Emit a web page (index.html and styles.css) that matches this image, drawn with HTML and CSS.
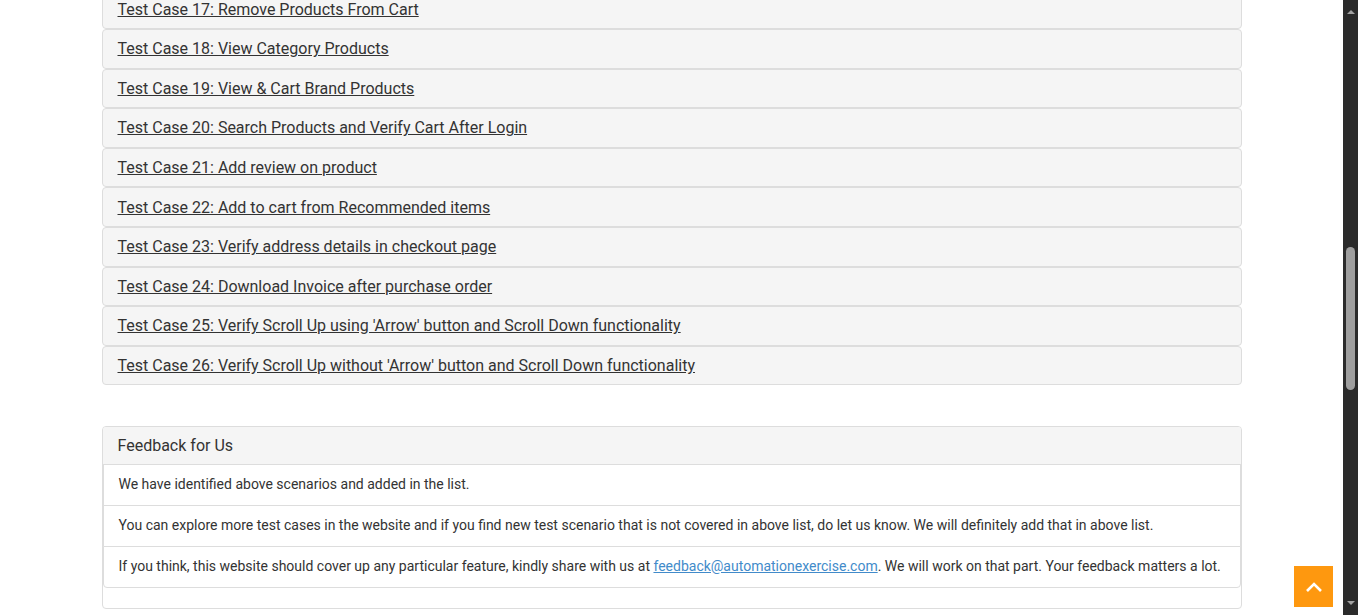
FILE: index.html
```html
<!DOCTYPE html>
<html lang="en">
<head>
<meta charset="utf-8">
<title>Test Cases</title>
<link rel="stylesheet" href="styles.css">
</head>
<body>
<div class="page">
  <main class="main">
    <div class="container">
      <div class="cases">
        <div class="case"><a href="#">Test Case 17: Remove Products From Cart</a></div>
        <div class="case"><a href="#">Test Case 18: View Category Products</a></div>
        <div class="case"><a href="#">Test Case 19: View &amp; Cart Brand Products</a></div>
        <div class="case"><a href="#">Test Case 20: Search Products and Verify Cart After Login</a></div>
        <div class="case"><a href="#">Test Case 21: Add review on product</a></div>
        <div class="case"><a href="#">Test Case 22: Add to cart from Recommended items</a></div>
        <div class="case"><a href="#">Test Case 23: Verify address details in checkout page</a></div>
        <div class="case"><a href="#">Test Case 24: Download Invoice after purchase order</a></div>
        <div class="case"><a href="#">Test Case 25: Verify Scroll Up using 'Arrow' button and Scroll Down functionality</a></div>
        <div class="case"><a href="#">Test Case 26: Verify Scroll Up without 'Arrow' button and Scroll Down functionality</a></div>
      </div>
      <section class="feedback">
        <div class="feedback-heading">Feedback for Us</div>
        <ul class="feedback-list">
          <li>We have identified above scenarios and added in the list.</li>
          <li>You can explore more test cases in the website and if you find new test scenario that is not covered in above list, do let us know. We will definitely add that in above list.</li>
          <li>If you think, this website should cover up any particular feature, kindly share with us at <a class="mail" href="#">feedback@automationexercise.com</a>. We will work on that part. Your feedback matters a lot.</li>
        </ul>
      </section>
    </div>
    <a class="scroll-up" href="#" aria-label="Scroll up">
      <svg width="18" height="12" viewBox="0 0 18 12"><path d="M2 10 L9 3 L16 10" fill="none" stroke="#fff" stroke-width="2.6"/></svg>
    </a>
  </main>
  <aside class="scrollbar">
    <span class="arrow-up"></span>
    <div class="track"><div class="thumb"></div></div>
    <span class="arrow-down"></span>
  </aside>
</div>
</body>
</html>
```
FILE: styles.css
```css
html, body {
  margin: 0;
  padding: 0;
  height: 615px;
  overflow: hidden;
  background: #fff;
}
body {
  font-family: Roboto, "Liberation Sans", sans-serif;
  color: #333;
}
.page {
  display: flex;
  height: 615px;
}
.main {
  flex: 1;
  overflow: hidden;
}
.container {
  width: 1140px;
  margin: 0 auto;
}
.cases {
  margin-top: -10.6px;
  display: flex;
  flex-direction: column;
}
.case {
  box-sizing: border-box;
  height: 39.6px;
  border: 1px solid #ddd;
  border-radius: 4px;
  background: #f5f5f5;
  padding: 0 15px;
  display: flex;
  align-items: center;
  font-size: 16px;
}
.case a {
  color: #333;
  text-decoration: underline;
}
.feedback {
  margin-top: 40.5px;
  border: 1px solid #ddd;
  border-radius: 4px;
  padding-bottom: 20px;
}
.feedback-heading {
  height: 37px;
  background: #f5f5f5;
  padding: 0 15px;
  display: flex;
  align-items: center;
  font-size: 16px;
  color: #333;
  border-radius: 3px 3px 0 0;
}
.feedback-list {
  list-style: none;
  margin: 0;
  padding: 0;
}
.feedback-list li {
  border: 1px solid #ddd;
  margin-bottom: -1px;
  padding: 9px 15px 11px;
  font-size: 14px;
  line-height: 20px;
  color: #333;
  background: #fff;
}
.feedback-list li:last-child {
  margin-bottom: 0;
  border-radius: 0 0 4px 4px;
}
.mail {
  color: #428bca;
  text-decoration: underline;
}
.scroll-up {
  position: fixed;
  right: 25px;
  bottom: 8px;
  width: 39px;
  height: 41px;
  background: #fe980f;
  display: flex;
  align-items: center;
  justify-content: center;
}
.scrollbar {
  width: 15px;
  height: 615px;
  background: #2b2b2b;
  display: flex;
  flex-direction: column;
  align-items: center;
}
.arrow-up {
  margin-top: 10px;
  width: 0;
  height: 0;
  border-left: 4px solid transparent;
  border-right: 4px solid transparent;
  border-bottom: 4px solid #a3a3a3;
}
.track {
  flex: 1;
  width: 100%;
  display: flex;
  justify-content: center;
}
.thumb {
  margin-top: 233px;
  width: 9px;
  height: 143px;
  border-radius: 5px;
  background: #9f9f9f;
}
.arrow-down {
  margin-bottom: 10px;
  width: 0;
  height: 0;
  border-left: 4px solid transparent;
  border-right: 4px solid transparent;
  border-top: 4px solid #a3a3a3;
}
```
